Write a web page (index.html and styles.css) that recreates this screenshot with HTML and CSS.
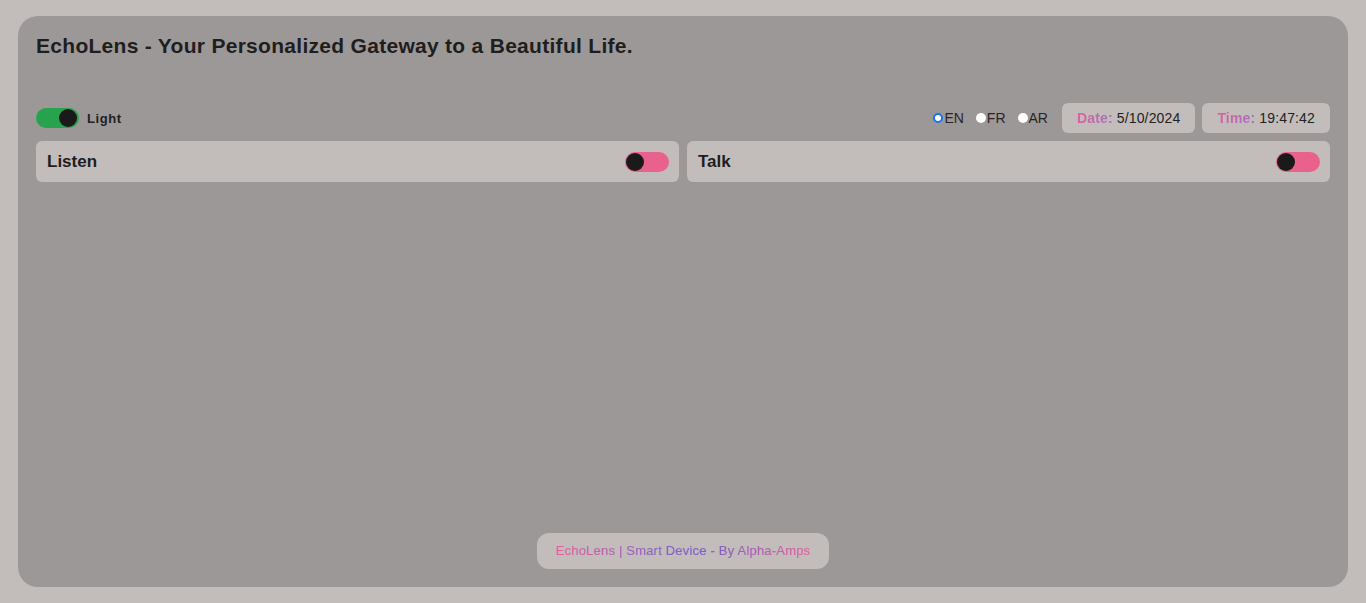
FILE: index.html
```html
<!DOCTYPE html>
<html>
<head>
<meta charset="utf-8">
<link rel="stylesheet" href="styles.css">
</head>
<body>
<div class="app">
  <h1 class="title">EchoLens - Your Personalized Gateway to a Beautiful Life.</h1>
  <div class="toolbar">
    <div class="theme">
      <span class="switch on"><span class="knob"></span></span>
      <span class="theme-label">Light</span>
    </div>
    <div class="right">
      <div class="langs">
        <label class="lang"><span class="radio checked"></span>EN</label>
        <label class="lang"><span class="radio"></span>FR</label>
        <label class="lang"><span class="radio"></span>AR</label>
      </div>
      <div class="chip"><span class="grad-label">Date:</span> 5/10/2024</div>
      <div class="chip"><span class="grad-label">Time:</span> 19:47:42</div>
    </div>
  </div>
  <div class="cards">
    <div class="card"><span class="card-title">Listen</span><span class="switch off"><span class="knob"></span></span></div>
    <div class="card"><span class="card-title">Talk</span><span class="switch off"><span class="knob"></span></span></div>
  </div>
  <div class="spacer"></div>
  <div class="footer"><span class="footer-text">EchoLens | Smart Device - By Alpha-Amps</span></div>
</div>
</body>
</html>
```

FILE: styles.css
```css
* { box-sizing: border-box; }
html, body { height: 100%; }
body {
  margin: 0;
  padding: 16px 18px;
  background: #c2bcbb;
  font-family: "Liberation Sans", Arial, sans-serif;
  color: #1c1c1c;
}
.app {
  height: 571px;
  background: #9c9897;
  border-radius: 20px;
  padding: 18px 18px 18px 18px;
  display: flex;
  flex-direction: column;
}
.title {
  margin: 0;
  font-size: 21px;
  font-weight: bold;
  line-height: 24px;
  color: #1e1e1e;
  letter-spacing: 0.29px;
}
.toolbar {
  margin-top: 45px;
  display: flex;
  justify-content: space-between;
  align-items: center;
  height: 30px;
}
.theme { display: flex; align-items: center; gap: 8px; }
.theme-label { font-size: 13px; font-weight: bold; color: #222; letter-spacing: 0.6px; }
.switch {
  display: inline-flex;
  align-items: center;
  width: 44px;
  height: 20px;
  border-radius: 10px;
  padding: 1px;
}
.switch .knob {
  width: 18px;
  height: 18px;
  border-radius: 50%;
  background: #1b1a1a;
}
.switch.on { background: #27a34e; justify-content: flex-end; width: 43px; padding: 1px 2px; }
.switch.off { background: #e9628d; justify-content: flex-start; padding: 1px 1px; }
.right { display: flex; align-items: center; gap: 7px; }
.langs { display: flex; align-items: center; gap: 12px; margin-right: 7px; font-size: 14px; color: #2a2424; }
.lang { display: flex; align-items: center; }
.radio {
  width: 10px; height: 10px; border-radius: 50%;
  background: #fff;
  margin-right: 1px;
  display: inline-block;
}
.radio.checked { border: 2px solid #1a73e8; background: #fff; }
.chip {
  height: 30px;
  background: #c2bcbb;
  border-radius: 6px;
  padding: 0 15px;
  display: flex;
  align-items: center;
  font-size: 14px;
  letter-spacing: 0.15px;
  color: #222;
  white-space: pre;
}
.grad-label {
  font-weight: bold;
  background: linear-gradient(90deg, #e0609a, #a070c0);
  -webkit-background-clip: text;
  background-clip: text;
  color: transparent;
}
.cards {
  margin-top: 8px;
  display: grid;
  grid-template-columns: 1fr 1fr;
  gap: 8px;
}
.card {
  height: 41px;
  background: #c2bcbb;
  border-radius: 6px;
  padding: 0 10px 0 11px;
  display: flex;
  align-items: center;
  justify-content: space-between;
}
.card-title { font-size: 17px; font-weight: bold; color: #1e1e1e; }
.spacer { flex: 1; }
.footer {
  align-self: center;
  width: 292px;
  height: 36px;
  background: #c2bcbb;
  border-radius: 12px;
  display: flex;
  align-items: center;
  justify-content: center;
}
.footer-text {
  font-size: 13px;
  letter-spacing: 0.2px;
  margin-top: -2px;
  -webkit-text-stroke: 0.2px transparent;
  background: linear-gradient(90deg, #e8609a 0%, #8a64c4 40%, #7a60c4 60%, #e8609a 100%);
  -webkit-background-clip: text;
  background-clip: text;
  color: transparent;
}
```
